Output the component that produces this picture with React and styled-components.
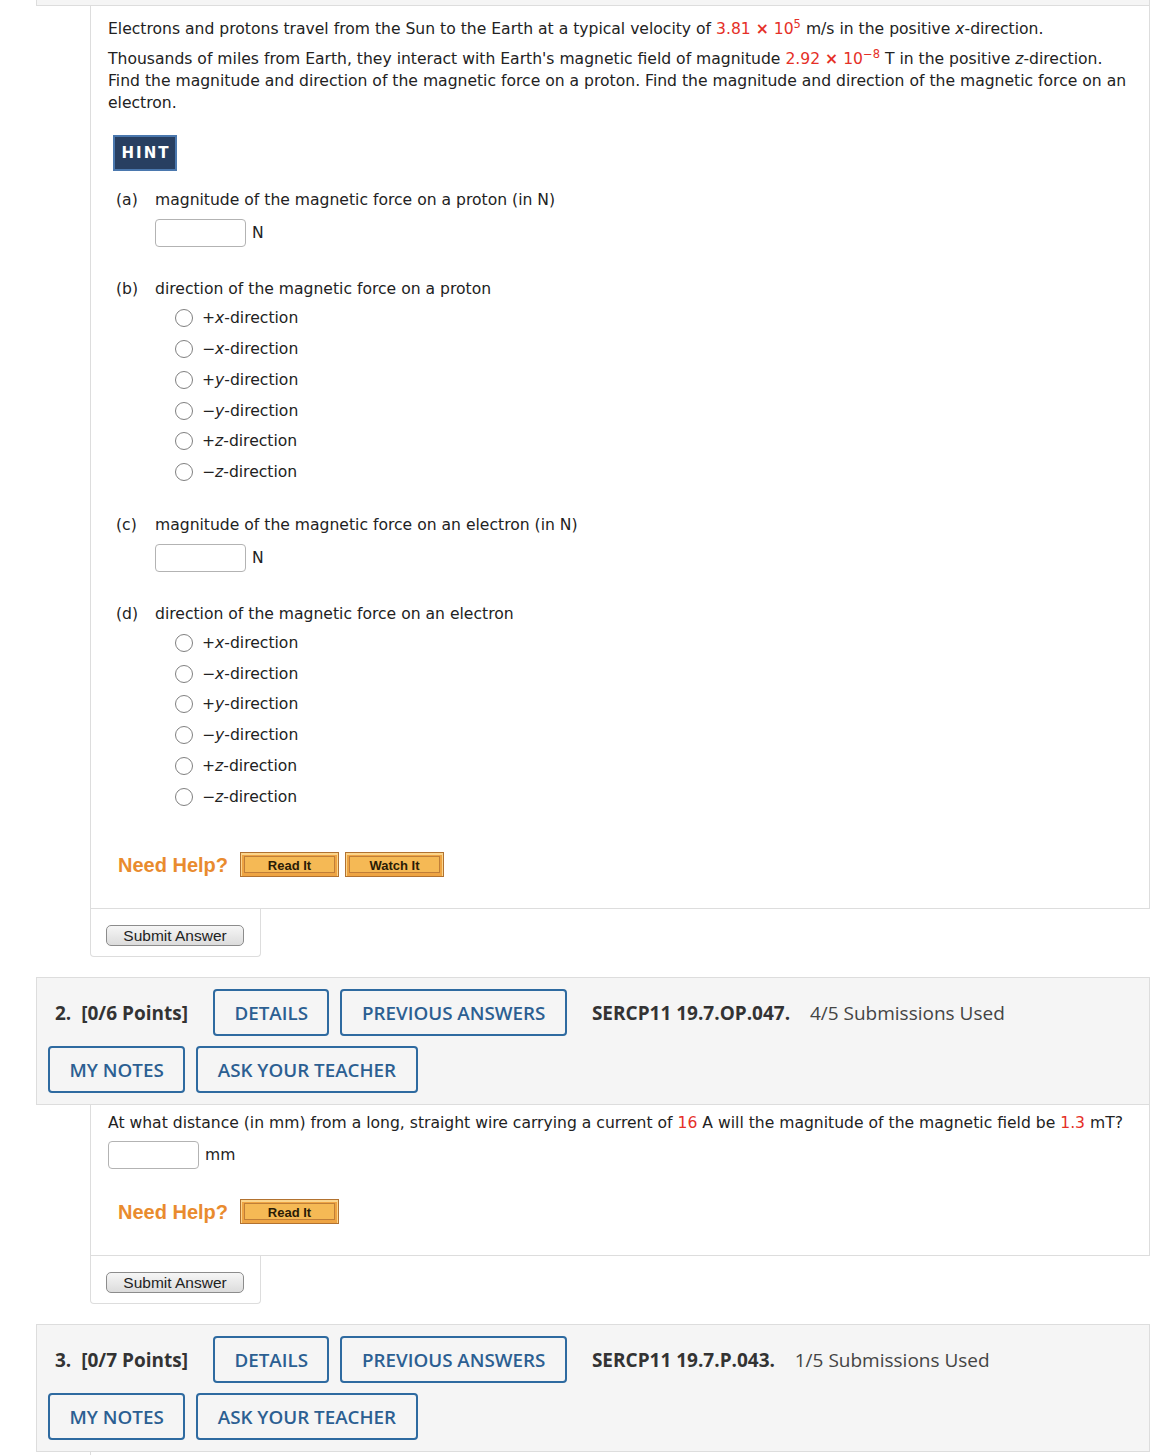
import styled, { createGlobalStyle } from 'styled-components';

const GlobalStyle = createGlobalStyle`
  body {
    margin: 0;
    background: #fff;
    font-family: "DejaVu Sans", Verdana, sans-serif;
    color: #222;
  }
`;

const Page = styled.div`
  margin-left: 36px;
  width: 1114px;
  padding-bottom: 20px;
`;

const TopStub = styled.div`
  height: 6px;
  background: #f5f5f5;
  border: 1px solid #ddd;
  border-top: none;
  box-sizing: border-box;
`;

const Header = styled.div`
  background: #f5f5f5;
  border: 1px solid #ddd;
  padding: 11px 11px 11px;
  display: flex;
  flex-direction: column;
  gap: 10px;
  font-family: "Open Sans", sans-serif;
`;

const HeaderRow = styled.div`
  display: flex;
  align-items: center;
  gap: 11px;
`;

const PointsLabel = styled.div`
  margin: 0 14px 0 7px;
  font-size: 19px;
  font-weight: 700;
  color: #333;
  white-space: pre;
`;

const OutlineButton = styled.button`
  height: 47px;
  box-sizing: border-box;
  padding: 0 19.5px;
  border: 2px solid #2e6aa0;
  border-radius: 4px;
  background: transparent;
  color: #2c5f92;
  font-family: "Open Sans", sans-serif;
  font-size: 18.8px;
  font-weight: 600;
  text-transform: uppercase;
  display: flex;
  align-items: center;
`;

const Info = styled.div`
  margin-left: 14px;
  font-size: 19px;
  color: #444;
  white-space: pre;

  b {
    color: #333;
    font-weight: 700;
  }
`;

const Body = styled.div`
  margin-left: 54px;
  border: 1px solid #ddd;
  border-top: none;
  padding: ${({ $top }) => $top}px 20px ${({ $bottom }) => $bottom}px 17px;
  font-size: 15.6px;
  line-height: 22px;
`;

const Para = styled.p`
  margin: 0 0 ${({ $gap }) => $gap || 0}px;
`;

const Val = styled.span`
  color: #e53027;

  b {
    font-weight: 700;
  }

  sup {
    font-size: 11.5px;
    line-height: 0;
  }
`;

const HintButton = styled.button`
  margin: 21px 0 0 5px;
  width: 64px;
  height: 36px;
  box-sizing: border-box;
  background: #283f61;
  border: 2px solid #4b78ae;
  color: #fff;
  font-family: "DejaVu Sans", Verdana, sans-serif;
  font-weight: 700;
  font-size: 15px;
  letter-spacing: 2px;
  padding: 0 0 0 2px;
`;

const Part = styled.div`
  margin: ${({ $top }) => $top}px 0 0 8px;
`;

const PartHead = styled.div`
  display: flex;
`;

const PartTag = styled.span`
  width: 39px;
  flex: none;
`;

const InputRow = styled.div`
  display: flex;
  align-items: center;
  gap: 6px;
  margin: ${({ $top }) => $top}px 0 0 ${({ $indent }) => $indent}px;
`;

const TextBox = styled.input`
  width: 91px;
  height: 28px;
  box-sizing: border-box;
  border: 1px solid #b3b3b3;
  border-radius: 4px;
  margin: 0;
`;

const RadioList = styled.div`
  margin: 3px 0 0 59px;
`;

const RadioRow = styled.label`
  height: 30.75px;
  display: flex;
  align-items: center;
  gap: 9px;
`;

const Radio = styled.input`
  appearance: none;
  width: 18px;
  height: 18px;
  margin: 0;
  border: 1.5px solid #808080;
  border-radius: 50%;
  background: #fff;
`;

const HelpRow = styled.div`
  display: flex;
  align-items: center;
  margin: ${({ $top }) => $top}px 0 0 10px;
  height: 25px;
`;

const HelpText = styled.span`
  font-family: "Liberation Sans", Arial, sans-serif;
  font-weight: 700;
  font-size: 20px;
  color: #e98b2e;
  margin-right: 12px;
`;

const HelpButton = styled.button`
  width: 99px;
  height: 25px;
  margin-right: 6px;
  box-sizing: border-box;
  border: 1px solid #b27230;
  background: #f5b955;
  box-shadow: inset 0 1px 0 1px #fbd58c, inset 0 0 0 3px #eea443, inset 0 0 0 4px #c07e38;
  font-family: "Liberation Sans", Arial, sans-serif;
  font-weight: 700;
  font-size: 13px;
  color: #2a1c06;
  padding: 1px 0 0;
`;

const SubmitTab = styled.div`
  margin-left: 54px;
  width: 171px;
  height: 48px;
  box-sizing: border-box;
  border: 1px solid #ddd;
  border-top: none;
  border-radius: 0 0 4px 4px;
  padding: 16px 0 0 15px;
  margin-bottom: 20px;
`;

const SubmitButton = styled.button`
  width: 138px;
  height: 21px;
  box-sizing: border-box;
  border: 1px solid #8c8c8c;
  border-radius: 5px;
  background: linear-gradient(#f6f6f6, #dcdcdc);
  font-family: "Liberation Sans", Arial, sans-serif;
  font-size: 15.5px;
  line-height: 17px;
  color: #222;
  padding: 0;
`;

const BodyStub = styled.div`
  margin-left: 54px;
  height: 4px;
  border-left: 1px solid #ddd;
`;

const dirs = [
  ['+', 'x'],
  ['\u2212', 'x'],
  ['+', 'y'],
  ['\u2212', 'y'],
  ['+', 'z'],
  ['\u2212', 'z'],
];

function Directions({ name }) {
  return (
    <RadioList>
      {dirs.map(([sign, axis]) => (
        <RadioRow key={sign + axis}>
          <Radio type="radio" name={name} />
          <span>
            {sign}
            <i>{axis}</i>-direction
          </span>
        </RadioRow>
      ))}
    </RadioList>
  );
}

function QuestionHeader({ num, points, code, used }) {
  return (
    <Header>
      <HeaderRow>
        <PointsLabel>{`${num}.  [${points} Points]`}</PointsLabel>
        <OutlineButton>Details</OutlineButton>
        <OutlineButton>Previous Answers</OutlineButton>
        <Info>
          <b>{code}</b>
          {`    ${used} Submissions Used`}
        </Info>
      </HeaderRow>
      <HeaderRow>
        <OutlineButton>My Notes</OutlineButton>
        <OutlineButton>Ask Your Teacher</OutlineButton>
      </HeaderRow>
    </Header>
  );
}

export default function App() {
  return (
    <>
      <GlobalStyle />
      <Page>
        <TopStub />
        <Body $top={12} $bottom={31}>
          <Para $gap={8}>
            Electrons and protons travel from the Sun to the Earth at a typical velocity of{' '}
            <Val>
              3.81 <b>×</b> 10<sup>5</sup>
            </Val>{' '}
            m/s in the positive <i>x</i>-direction.
          </Para>
          <Para>
            Thousands of miles from Earth, they interact with Earth's magnetic field of magnitude{' '}
            <Val>
              2.92 <b>×</b> 10<sup>−8</sup>
            </Val>{' '}
            T in the positive <i>z</i>-direction. Find the magnitude and direction of the magnetic
            force on a proton. Find the magnitude and direction of the magnetic force on an electron.
          </Para>
          <HintButton>HINT</HintButton>

          <Part $top={18}>
            <PartHead>
              <PartTag>(a)</PartTag>
              <span>magnitude of the magnetic force on a proton (in N)</span>
            </PartHead>
            <InputRow $top={8} $indent={39}>
              <TextBox />
              <span>N</span>
            </InputRow>
          </Part>

          <Part $top={31}>
            <PartHead>
              <PartTag>(b)</PartTag>
              <span>direction of the magnetic force on a proton</span>
            </PartHead>
            <Directions name="b" />
          </Part>

          <Part $top={26}>
            <PartHead>
              <PartTag>(c)</PartTag>
              <span>magnitude of the magnetic force on an electron (in N)</span>
            </PartHead>
            <InputRow $top={8} $indent={39}>
              <TextBox />
              <span>N</span>
            </InputRow>
          </Part>

          <Part $top={31}>
            <PartHead>
              <PartTag>(d)</PartTag>
              <span>direction of the magnetic force on an electron</span>
            </PartHead>
            <Directions name="d" />
          </Part>

          <HelpRow $top={40}>
            <HelpText>Need Help?</HelpText>
            <HelpButton>Read It</HelpButton>
            <HelpButton>Watch It</HelpButton>
          </HelpRow>
        </Body>
        <SubmitTab>
          <SubmitButton>Submit Answer</SubmitButton>
        </SubmitTab>

        <QuestionHeader num="2" points="0/6" code="SERCP11 19.7.OP.047." used="4/5" />
        <Body $top={7} $bottom={31}>
          <Para>
            At what distance (in mm) from a long, straight wire carrying a current of <Val>16</Val> A
            will the magnitude of the magnetic field be <Val>1.3</Val> mT?
          </Para>
          <InputRow $top={7} $indent={0}>
            <TextBox />
            <span>mm</span>
          </InputRow>
          <HelpRow $top={30}>
            <HelpText>Need Help?</HelpText>
            <HelpButton>Read It</HelpButton>
          </HelpRow>
        </Body>
        <SubmitTab>
          <SubmitButton>Submit Answer</SubmitButton>
        </SubmitTab>

        <QuestionHeader num="3" points="0/7" code="SERCP11 19.7.P.043." used="1/5" />
        <BodyStub />
      </Page>
    </>
  );
}
